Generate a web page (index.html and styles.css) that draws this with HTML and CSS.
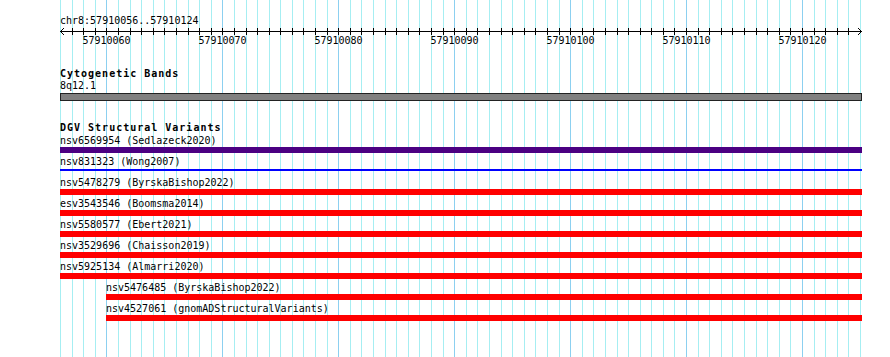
FILE: index.html
```html
<!DOCTYPE html>
<html lang="en">

<head>
    <meta charset="UTF-8">
    <meta name="viewport" content="width=device-width, initial-scale=1.0">
    <title>chr8:57910056..57910124</title>
    <link rel="stylesheet" href="styles.css">
</head>

<body>
    <div class="view">
        <svg class="grid" id="grid" width="890" height="357"></svg>

        <div class="ruler">
            <div class="locus">chr8:57910056..57910124</div>
            <svg class="scale" id="scale" width="890" height="20">
                <line class="axis" x1="60" y1="4.5" x2="862" y2="4.5"></line>
                <polyline class="axis" points="64,1 60.5,4.5 64,8"></polyline>
                <polyline class="axis" points="858,1 861.5,4.5 858,8"></polyline>
            </svg>
        </div>

        <section class="track">
            <h3 class="track-title">Cytogenetic Bands</h3>
            <div class="feature">
                <div class="label">8q12.1</div>
                <div class="band"></div>
            </div>
        </section>

        <section class="track dgv">
            <h3 class="track-title">DGV Structural Variants</h3>
            <div class="feature">
                <div class="label">nsv6569954 (Sedlazeck2020)</div>
                <div class="bar purple"></div>
            </div>
            <div class="feature">
                <div class="label">nsv831323 (Wong2007)</div>
                <div class="bar thin"></div>
            </div>
            <div class="feature">
                <div class="label">nsv5478279 (ByrskaBishop2022)</div>
                <div class="bar"></div>
            </div>
            <div class="feature">
                <div class="label">esv3543546 (Boomsma2014)</div>
                <div class="bar"></div>
            </div>
            <div class="feature">
                <div class="label">nsv5580577 (Ebert2021)</div>
                <div class="bar"></div>
            </div>
            <div class="feature">
                <div class="label">nsv3529696 (Chaisson2019)</div>
                <div class="bar"></div>
            </div>
            <div class="feature">
                <div class="label">nsv5925134 (Almarri2020)</div>
                <div class="bar"></div>
            </div>
            <div class="feature offset">
                <div class="label">nsv5476485 (ByrskaBishop2022)</div>
                <div class="bar"></div>
            </div>
            <div class="feature offset">
                <div class="label">nsv4527061 (gnomADStructuralVariants)</div>
                <div class="bar"></div>
            </div>
        </section>
    </div>

    <script>
        const START = 57910056;
        const BASES = 69;
        const LEFT = 60;
        const SPAN = 800;
        const step = SPAN / BASES;
        const ns = 'http://www.w3.org/2000/svg';

        const grid = document.getElementById('grid');
        const scale = document.getElementById('scale');

        function addLine(svg, x, y1, y2, cls) {
            const line = document.createElementNS(ns, 'line');
            line.setAttribute('x1', x);
            line.setAttribute('x2', x);
            line.setAttribute('y1', y1);
            line.setAttribute('y2', y2);
            line.setAttribute('class', cls);
            svg.appendChild(line);
        }

        for (let i = 0; i <= BASES; i++) {
            const x = Math.round(LEFT + i * step) + 0.5;
            const major = (START + i) % 10 === 0;
            addLine(grid, x, 0, 357, major ? 'gridline major' : 'gridline');

            if (i > 0 && i < BASES) {
                addLine(scale, x, 1, 8, 'axis');
            }

            if (major) {
                const label = document.createElementNS(ns, 'text');
                label.setAttribute('x', x);
                label.setAttribute('y', 17);
                label.setAttribute('class', 'scale-label');
                label.textContent = START + i;
                scale.appendChild(label);
            }
        }
    </script>
</body>

</html>
```

FILE: styles.css
```css
body {
    margin: 0;
    background-color: #ffffff;
    font-family: "DejaVu Sans Mono", "Liberation Mono", monospace;
    font-size: 10px;
    color: #000000;
}

.view {
    position: relative;
    width: 890px;
    height: 357px;
    overflow: hidden;
    padding-top: 15px;
    box-sizing: border-box;
}

.grid {
    position: absolute;
    top: 0;
    left: 0;
    z-index: 0;
    shape-rendering: crispEdges;
}

.gridline {
    stroke: #a6eef2;
    stroke-width: 1;
}

.gridline.major {
    stroke: #8cd0f0;
}

.ruler,
.track {
    position: relative;
    z-index: 1;
}

.locus {
    padding-left: 60px;
    line-height: 12px;
}

.scale {
    display: block;
    shape-rendering: crispEdges;
}

.axis {
    stroke: #000000;
    stroke-width: 1;
    fill: none;
}

.scale-label {
    font-family: "DejaVu Sans Mono", "Liberation Mono", monospace;
    font-size: 10px;
    text-anchor: middle;
    fill: #000000;
}

.track {
    padding-left: 60px;
    margin-top: 21px;
}

.track-title {
    margin: 0;
    font-size: 10px;
    font-weight: bold;
    letter-spacing: 1px;
    line-height: 12px;
}

.dgv .track-title {
    margin-bottom: 1px;
}

.feature {
    width: 802px;
    padding-bottom: 3px;
}

.feature:last-child {
    padding-bottom: 0;
}

.feature.offset {
    margin-left: 46px;
    width: 756px;
}

.label {
    line-height: 12px;
    white-space: nowrap;
}

.band {
    margin-top: 1px;
    height: 6px;
    background-color: #808080;
    border: 1px solid #222222;
    width: 800px;
}

.bar {
    height: 6px;
    background-color: #ff0000;
}

.bar.purple {
    background-color: #4b0082;
}

.bar.thin {
    height: 2px;
    margin: 1px 0 3px;
    background-color: #0000ff;
}
```
